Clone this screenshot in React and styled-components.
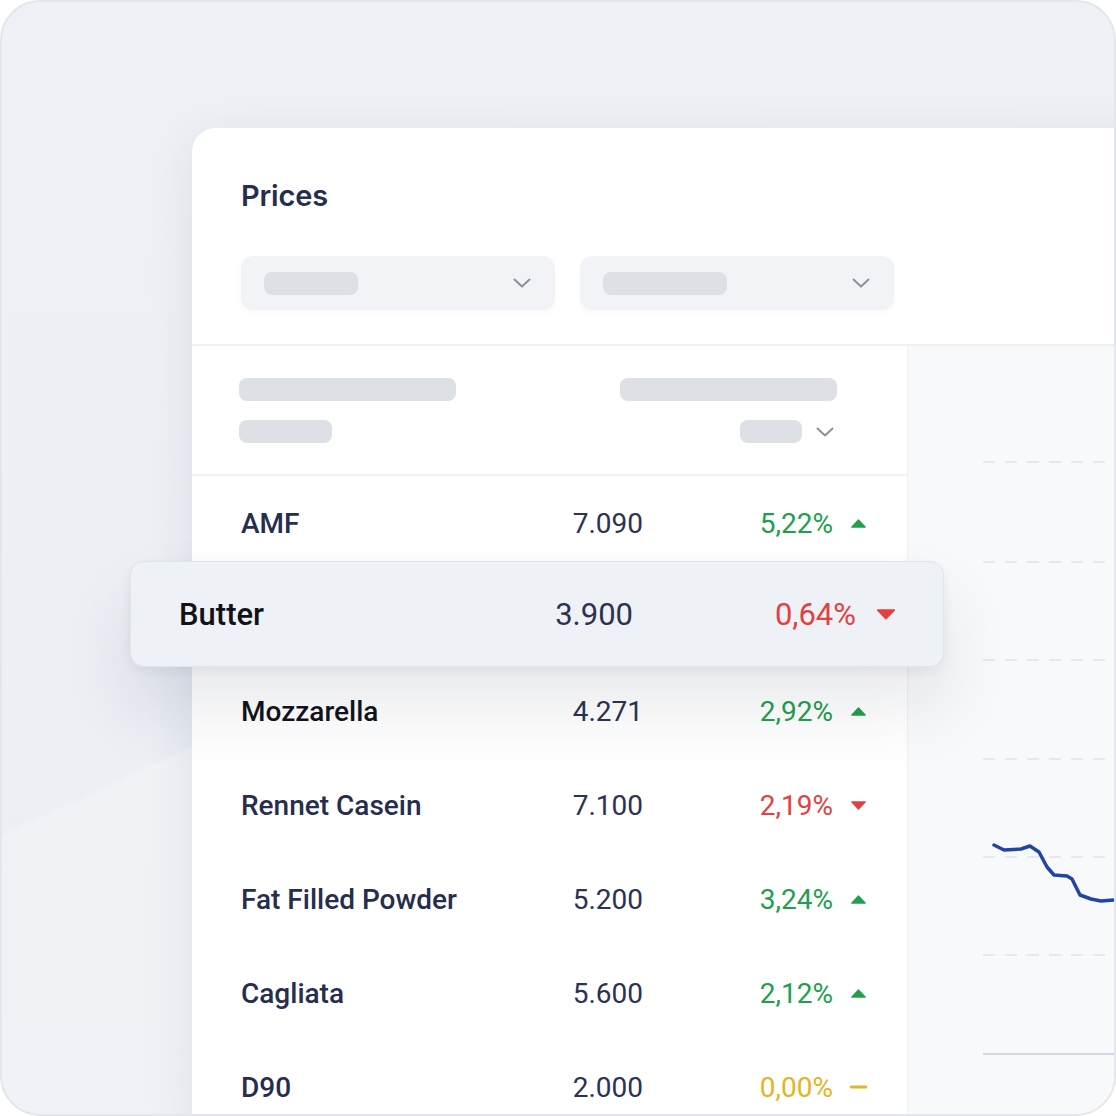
import styled, { createGlobalStyle } from "styled-components";

const GlobalStyle = createGlobalStyle`
  html, body {
    margin: 0;
    padding: 0;
    background: #ffffff;
  }
  body {
    font-family: Roboto, "Liberation Sans", sans-serif;
  }
`;

const Frame = styled.div`
  position: relative;
  box-sizing: border-box;
  width: 1116px;
  height: 1116px;
  overflow: hidden;
  border: 2px solid #e3e7ec;
  border-radius: 40px;
  background:
    linear-gradient(155deg, rgba(255, 255, 255, 0) 51%, rgba(255, 255, 255, 0.22) 51.2%),
    linear-gradient(180deg, #eef1f5 0%, #ebeef3 100%);
  padding: 126px 0 0 190px;
`;

const Card = styled.div`
  width: 1040px;
  background: #ffffff;
  border-radius: 24px 24px 0 0;
  box-shadow: 0 10px 50px rgba(40, 55, 90, 0.09);
  display: flex;
  flex-direction: column;
`;

const Header = styled.div`
  padding: 50px 49px 34px;
  border-bottom: 2px solid #eef0f3;
  display: flex;
  flex-direction: column;
  gap: 42px;
`;

const Title = styled.h2`
  margin: 0;
  font-family: Inter, "Open Sans", sans-serif;
  font-weight: 600;
  font-size: 29px;
  line-height: 36px;
  color: #262d4f;
  letter-spacing: -0.2px;
`;

const Filters = styled.div`
  display: flex;
  gap: 25px;
`;

const Select = styled.div`
  width: 314px;
  height: 54px;
  box-sizing: border-box;
  border-radius: 12px;
  background: #f1f3f6;
  box-shadow: 0 2px 6px rgba(30, 40, 70, 0.03);
  display: flex;
  align-items: center;
  justify-content: space-between;
  padding: 0 24px 0 23px;
`;

const Skeleton = styled.div`
  width: ${(p) => p.$w}px;
  height: 23px;
  border-radius: 8px;
  background: #dde0e5;
`;

const Chevron = () => (
  <svg width="18" height="10" viewBox="0 0 18 10" fill="none">
    <path d="M1.5 1.5L9 8.5L16.5 1.5" stroke="#8b909c" strokeWidth="2" strokeLinecap="round" strokeLinejoin="round" />
  </svg>
);

const Body = styled.div`
  display: grid;
  grid-template-columns: 715px 1fr;
`;

const ListColumn = styled.div`
  display: flex;
  flex-direction: column;
`;

const ListHead = styled.div`
  height: 130px;
  box-sizing: border-box;
  border-bottom: 2px solid #f1f2f4;
  padding: 32px 70px 0 47px;
  display: flex;
  justify-content: space-between;
`;

const HeadGroup = styled.div`
  display: flex;
  flex-direction: column;
  align-items: ${(p) => (p.$right ? "flex-end" : "flex-start")};
  gap: 19px;
`;

const SortRow = styled.div`
  display: flex;
  align-items: center;
  gap: 14px;
  margin-right: 3px;
`;

const Row = styled.div`
  height: 94px;
  box-sizing: border-box;
  padding: 0 40px 0 49px;
  display: grid;
  grid-template-columns: 1fr 150px 190px 34px;
  align-items: center;
  font-size: 28px;
  color: #2d3152;
`;

const FocusRow = styled(Row)`
  position: relative;
  z-index: 2;
  height: 106px;
  margin: -9px -37px -3px -62px;
  padding: 0 47px 0 48px;
  grid-template-columns: 1fr 150px 223px 40px;
  font-size: 31px;
  background: #eef2f6;
  border: 1px solid #dfe5ec;
  border-radius: 14px;
  box-shadow: 0 40px 70px rgba(30, 40, 70, 0.1), 0 4px 12px rgba(30, 40, 70, 0.06);
`;

const Name = styled.span`
  font-weight: 500;
  color: ${(p) => (p.$dark ? "#111318" : "#262d4d")};
`;

const Price = styled.span`
  text-align: right;
`;

const tones = {
  up: "#20a04d",
  down: "#e3403f",
  flat: "#e4b522",
};

const Change = styled.span`
  text-align: right;
  color: ${(p) => tones[p.$trend]};
`;

const Trend = styled.span`
  justify-self: end;
  display: flex;
  align-items: center;
`;

const TrendIcon = ({ trend, size = 17 }) => {
  const h = Math.round(size * 0.55);
  if (trend === "flat") {
    return (
      <svg width={size} height="4" viewBox="0 0 17 4">
        <rect x="0" y="0.5" width="17" height="3" rx="1" fill={tones.flat} />
      </svg>
    );
  }
  const d = trend === "up" ? "M8.5 1.2L16 9H1Z" : "M8.5 8.8L16 1H1Z";
  return (
    <svg width={size} height={h} viewBox="0 0 17 10">
      <path d={d} fill={tones[trend]} stroke={tones[trend]} strokeWidth="1.5" strokeLinejoin="round" />
    </svg>
  );
};

const ChartPanel = styled.div`
  background: #f8f9fa;
  border-left: 1px solid #eef0f2;
  min-height: 780px;
`;

const products = [
  { name: "AMF", price: "7.090", change: "5,22%", trend: "up" },
  { name: "Butter", price: "3.900", change: "0,64%", trend: "down", focus: true },
  { name: "Mozzarella", price: "4.271", change: "2,92%", trend: "up", dark: true },
  { name: "Rennet Casein", price: "7.100", change: "2,19%", trend: "down" },
  { name: "Fat Filled Powder", price: "5.200", change: "3,24%", trend: "up" },
  { name: "Cagliata", price: "5.600", change: "2,12%", trend: "up" },
  { name: "D90", price: "2.000", change: "0,00%", trend: "flat" },
];

const gridLines = [116, 216, 314, 413, 511, 609];

const series = [
  [86, 499], [96, 504], [113, 503], [122, 500], [131, 506], [139, 521],
  [146, 529], [159, 530], [164, 533], [172, 549], [183, 553], [193, 555],
  [206, 554], [230, 552],
];

const PriceChart = () => (
  <svg width="320" height="780" viewBox="0 0 320 780" fill="none" style={{ display: "block" }}>
    {gridLines.map((y) => (
      <line key={y} x1="75" x2="320" y1={y} y2={y} stroke="#e0e2e6" strokeWidth="1.5" strokeDasharray="12 10" />
    ))}
    <line x1="75" x2="320" y1="708" y2="708" stroke="#d3dae6" strokeWidth="2" />
    <polyline
      points={series.map((p) => p.join(",")).join(" ")}
      stroke="#1f46a3"
      strokeWidth="3.5"
      strokeLinecap="round"
      strokeLinejoin="round"
    />
  </svg>
);

const App = () => {
  return (
    <>
      <GlobalStyle />
      <Frame>
        <Card>
          <Header>
            <Title>Prices</Title>
            <Filters>
              <Select>
                <Skeleton $w={94} />
                <Chevron />
              </Select>
              <Select>
                <Skeleton $w={124} />
                <Chevron />
              </Select>
            </Filters>
          </Header>
          <Body>
            <ListColumn>
              <ListHead>
                <HeadGroup>
                  <Skeleton $w={217} />
                  <Skeleton $w={93} />
                </HeadGroup>
                <HeadGroup $right>
                  <Skeleton $w={217} />
                  <SortRow>
                    <Skeleton $w={62} />
                    <Chevron />
                  </SortRow>
                </HeadGroup>
              </ListHead>
              {products.map((p) => {
                const R = p.focus ? FocusRow : Row;
                return (
                  <R key={p.name}>
                    <Name $dark={p.focus || p.dark}>{p.name}</Name>
                    <Price>{p.price}</Price>
                    <Change $trend={p.trend}>{p.change}</Change>
                    <Trend>
                      <TrendIcon trend={p.trend} size={p.focus ? 20 : 17} />
                    </Trend>
                  </R>
                );
              })}
            </ListColumn>
            <ChartPanel>
              <PriceChart />
            </ChartPanel>
          </Body>
        </Card>
      </Frame>
    </>
  );
};

export default App;
